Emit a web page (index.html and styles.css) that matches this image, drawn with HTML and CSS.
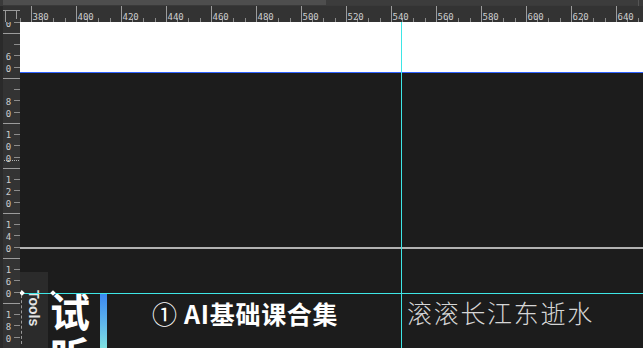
FILE: index.html
```html
<!DOCTYPE html>
<html lang="zh">
<head>
<meta charset="utf-8">
<title>Canvas</title>
<link rel="stylesheet" href="styles.css">
</head>
<body>
<div class="app">
  <div class="scrollbar"><div class="thumb"></div><div class="track"></div><div class="cap"></div></div>
  <div class="workspace">
    <div class="corner">
      <svg width="20" height="16" viewBox="0 0 20 16">
        <rect x="0" y="0" width="3" height="16" fill="#2a2a2a"/>
        <rect x="3" y="4" width="17" height="1" fill="#9a9a9a"/>
        <rect x="5" y="4" width="1" height="12" fill="#9a9a9a"/>
        <rect x="16" y="4" width="1" height="9" fill="#9a9a9a"/>
      </svg>
    </div>
    <div class="hruler">
      <svg width="623" height="16" viewBox="0 0 623 16">
        <defs>
          <pattern id="hp" x="11" y="0" width="45" height="16" patternUnits="userSpaceOnUse">
            <rect x="0" y="0" width="1" height="16" fill="#9c9c9c"/>
            <rect x="11" y="12" width="1" height="4" fill="#8c8c8c"/>
            <rect x="22" y="12" width="1" height="4" fill="#8c8c8c"/>
            <rect x="34" y="12" width="1" height="4" fill="#8c8c8c"/>
          </pattern>
        </defs>
        <rect x="0" y="0" width="623" height="16" fill="url(#hp)"/>
        <g class="rl">
          <text x="12.5" y="14">380</text>
          <text x="57.5" y="14">400</text>
          <text x="102.5" y="14">420</text>
          <text x="147.5" y="14">440</text>
          <text x="192.5" y="14">460</text>
          <text x="237.5" y="14">480</text>
          <text x="282.5" y="14">500</text>
          <text x="327.5" y="14">520</text>
          <text x="372.5" y="14">540</text>
          <text x="417.5" y="14">560</text>
          <text x="462.5" y="14">580</text>
          <text x="507.5" y="14">600</text>
          <text x="552.5" y="14">620</text>
          <text x="597.5" y="14">640</text>
        </g>
      </svg>
    </div>
    <div class="vruler">
      <svg width="20" height="326" viewBox="0 0 20 326">
        <defs>
          <pattern id="vp" x="0" y="11" width="20" height="45" patternUnits="userSpaceOnUse">
            <rect x="3" y="0" width="17" height="1" fill="#9c9c9c"/>
            <rect x="14" y="11" width="6" height="1" fill="#8c8c8c"/>
            <rect x="14" y="22" width="6" height="1" fill="#8c8c8c"/>
            <rect x="14" y="34" width="6" height="1" fill="#8c8c8c"/>
          </pattern>
        </defs>
        <rect x="0" y="0" width="3" height="326" fill="#2a2a2a"/>
        <rect x="3" y="0" width="17" height="326" fill="url(#vp)"/>
        <g class="rl vl">
          <text x="8.5" y="5">0</text>
          <text x="8.5" y="38">6</text><text x="8.5" y="50">0</text>
          <text x="8.5" y="83">8</text><text x="8.5" y="95">0</text>
          <text x="8.5" y="116">1</text><text x="8.5" y="128">0</text><text x="8.5" y="140">0</text>
          <text x="8.5" y="161">1</text><text x="8.5" y="173">2</text><text x="8.5" y="185">0</text>
          <text x="8.5" y="206">1</text><text x="8.5" y="218">4</text><text x="8.5" y="230">0</text>
          <text x="8.5" y="251">1</text><text x="8.5" y="263">6</text><text x="8.5" y="275">0</text>
          <text x="8.5" y="296">1</text><text x="8.5" y="308">8</text><text x="8.5" y="320">0</text>
        </g>
        <line x1="4" y1="138.5" x2="20" y2="138.5" stroke="#b0b0b0" stroke-dasharray="1 1"/>
      </svg>
    </div>
    <div class="canvas">
      <div class="paper"></div>
      <div class="gap-top"></div>
      <div class="divider"></div>
      <div class="gap-mid"></div>
      <div class="row">
        <div class="big">试<br>听</div>
        <div class="bar"></div>
        <div class="title"><span class="num">①</span> AI基础课合集</div>
        <div class="verse">滚滚长江东逝水</div>
      </div>
      <div class="tools-panel"><span class="tools-label">Tools</span></div>
      <div class="guide guide-v"></div>
      <div class="guide guide-h"></div>
      <div class="handle handle-a"></div>
      <div class="handle handle-b"></div>
    </div>
  </div>
</div>
</body>
</html>
```

FILE: styles.css
```css
html, body {
  margin: 0;
  padding: 0;
  width: 643px;
  height: 348px;
  overflow: hidden;
  background: #1c1c1c;
}

.app {
  display: flex;
  flex-direction: column;
  height: 348px;
}

.scrollbar {
  flex: 0 0 6px;
  display: flex;
  background: #3a3a3a;
  padding-left: 3px;
  box-sizing: border-box;
}

.thumb {
  width: 323px;
  height: 5px;
  background: #4e4e4e;
}

.track {
  flex: 1;
  height: 5px;
  background: #3c3c3c;
}

.cap {
  width: 1px;
  margin-right: 4px;
  background: #555;
}

.workspace {
  flex: 1;
  min-height: 0;
  display: grid;
  grid-template-columns: 20px 1fr;
  grid-template-rows: 16px 1fr;
}

.corner, .hruler, .vruler {
  background: #333333;
  overflow: hidden;
}

.corner svg, .hruler svg, .vruler svg {
  display: block;
}

.rl text {
  font-family: "DejaVu Sans Mono", monospace;
  font-size: 9px;
  fill: #cdcdcd;
}

.vl text {
  text-anchor: middle;
}

.canvas {
  position: relative;
  overflow: hidden;
  display: flex;
  flex-direction: column;
  background: #1c1c1c;
  min-height: 0;
}

.paper {
  flex: none;
  height: 50px;
  background: #ffffff;
  border-bottom: 1px solid #2f62ff;
}

.gap-top {
  flex: none;
  height: 174px;
}

.divider {
  flex: none;
  height: 2px;
  background: #b2b2b2;
}

.gap-mid {
  flex: none;
  height: 44px;
}

.row {
  flex: none;
  display: flex;
  align-items: flex-start;
  padding-left: 30px;
  height: 60px;
}

.big {
  flex: none;
  width: 40px;
  margin-top: -5px;
  font-family: "Noto Sans CJK SC", sans-serif;
  font-weight: 700;
  font-size: 40px;
  line-height: 44px;
  color: #ffffff;
}

.bar {
  flex: none;
  width: 7px;
  height: 60px;
  margin-left: 10px;
  background: linear-gradient(180deg, #3a86f2 0%, #5fb6ec 50%, #86eadf 100%);
}

.title {
  flex: none;
  width: 255px;
  margin-left: 45px;
  margin-top: 8px;
  font-family: "Noto Sans CJK SC", sans-serif;
  font-weight: 700;
  font-size: 25px;
  line-height: 25px;
  letter-spacing: 0.7px;
  color: #ffffff;
  white-space: nowrap;
}

.num {
  font-weight: 400;
}

.verse {
  flex: none;
  margin-top: 7px;
  font-family: "Noto Sans CJK SC", sans-serif;
  font-weight: 300;
  font-size: 25px;
  line-height: 25px;
  letter-spacing: 1.7px;
  color: #d6d6d6;
  white-space: nowrap;
}

.tools-panel {
  position: absolute;
  left: 0;
  top: 250px;
  bottom: 0;
  width: 28px;
  background: #2b2b2b;
  display: flex;
  justify-content: center;
  padding-top: 18px;
  box-sizing: border-box;
}

.tools-panel::before {
  content: "";
  position: absolute;
  left: 1px;
  top: 18px;
  bottom: 4px;
  border-left: 1px dashed #9a9a9a;
}

.tools-label {
  writing-mode: vertical-rl;
  font-family: "Liberation Sans", sans-serif;
  font-weight: 700;
  font-size: 14px;
  line-height: 16px;
  color: #e4e4e4;
}

.guide {
  position: absolute;
  background: #3ee6e6;
}

.guide-v {
  left: 381px;
  top: 0;
  bottom: 0;
  width: 1px;
}

.guide-h {
  left: 0;
  right: 0;
  top: 271px;
  height: 1px;
}

.handle {
  position: absolute;
  width: 4px;
  height: 4px;
  background: #ffffff;
  transform: rotate(45deg);
}

.handle-a {
  left: 31px;
  top: 269px;
}

.handle-b {
  left: 0;
  top: 269px;
}
```
